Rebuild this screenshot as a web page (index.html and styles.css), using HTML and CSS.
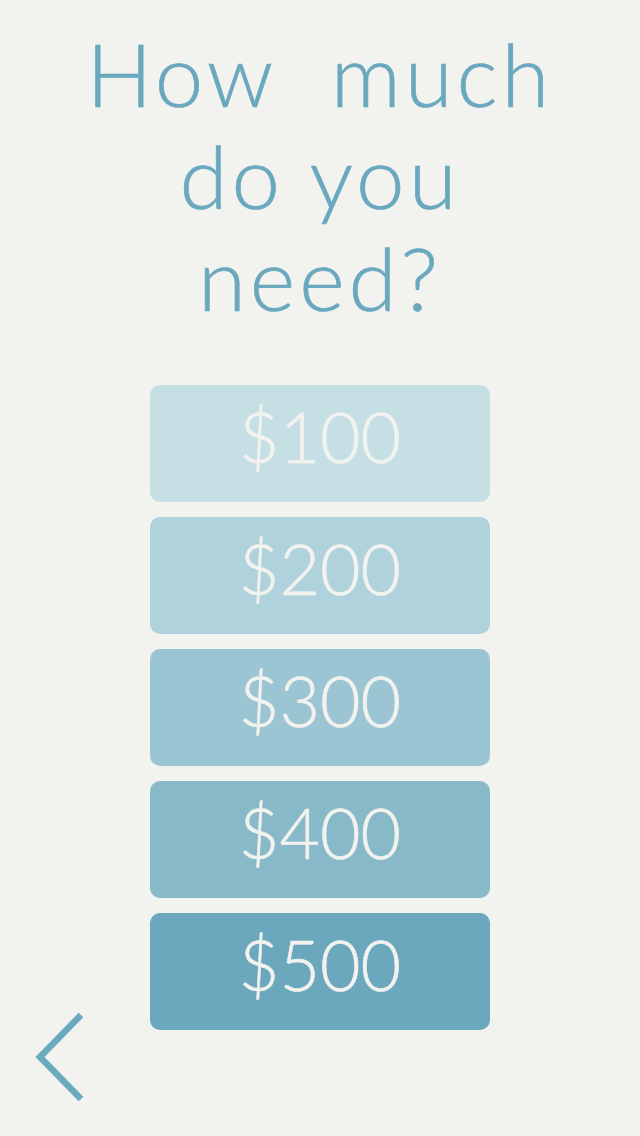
FILE: index.html
```html
<!DOCTYPE html>
<html>
<head>
<meta charset="utf-8">
<link rel="stylesheet" href="styles.css">
</head>
<body>
<main class="screen">
  <h1 class="title">How&nbsp; much<br>do you<br>need?</h1>
  <div class="options">
    <button class="opt opt-1">$100</button>
    <button class="opt opt-2">$200</button>
    <button class="opt opt-3">$300</button>
    <button class="opt opt-4">$400</button>
    <button class="opt opt-5">$500</button>
  </div>
  <a class="back" href="#" aria-label="Back">
    <svg width="60" height="96" viewBox="0 0 60 96">
      <polyline points="47,4 6,46 47,88" fill="none" stroke="#6ba9be" stroke-width="6.5"/>
    </svg>
  </a>
</main>
</body>
</html>
```
FILE: styles.css
```css
html, body {
  margin: 0;
  padding: 0;
  background: #f2f2ee;
}
.screen {
  position: relative;
  width: 640px;
  height: 1136px;
  display: flex;
  flex-direction: column;
  align-items: center;
  font-family: Lato, "Open Sans", sans-serif;
}
.title {
  margin: 23px 0 0;
  font-weight: 300;
  font-size: 87px;
  line-height: 102px;
  letter-spacing: 4px;
  color: #6aa8bf;
  text-align: center;
  -webkit-text-stroke: 0.6px #6aa8bf;
}
.options {
  margin-top: 56px;
  display: flex;
  flex-direction: column;
  gap: 15px;
}
.opt {
  width: 340px;
  height: 117px;
  border: none;
  border-radius: 10px;
  padding: 0 0 16px;
  font-family: Lato, "Open Sans", sans-serif;
  font-weight: 300;
  font-size: 70px;
  color: #f2f2ee;
  text-align: center;
  -webkit-text-stroke: 0.6px #f2f2ee;
}
.opt-1 { background: #c5dfe5; }
.opt-2 { background: #afd2dc; }
.opt-3 { background: #9bc5d2; }
.opt-4 { background: #88b9c9; }
.opt-5 { background: #6ca8bd; }
.back {
  position: absolute;
  left: 34px;
  top: 1011px;
  display: block;
}
```
